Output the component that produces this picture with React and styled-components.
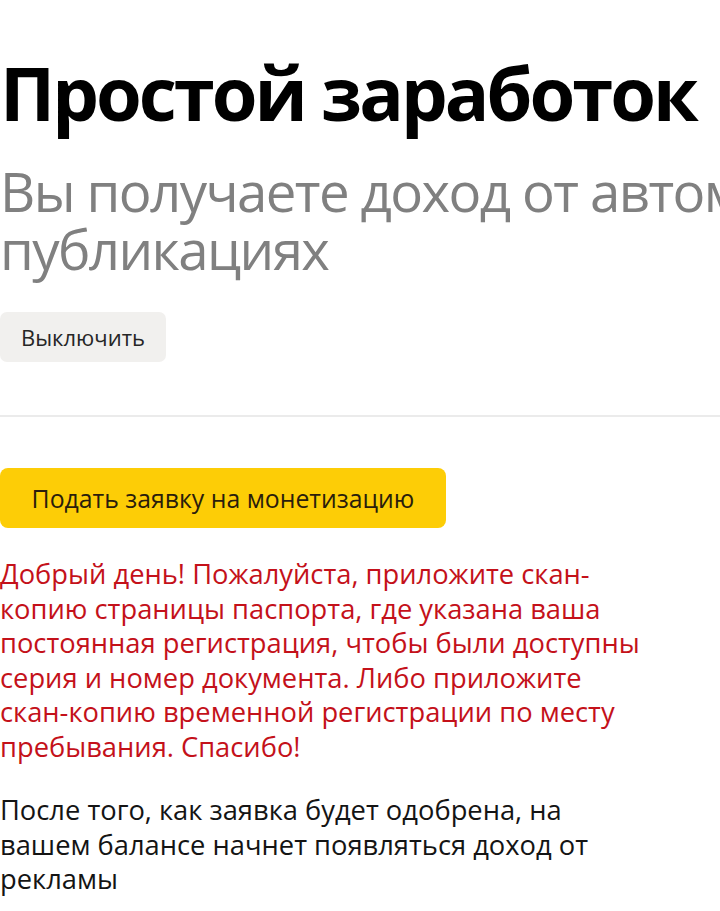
import React from "react";
import styled, { createGlobalStyle } from "styled-components";

const Global = createGlobalStyle`
  html, body { margin: 0; padding: 0; background: #fff; }
  body { font-family: "Open Sans", "Noto Sans", sans-serif; overflow: hidden; }
`;

const Page = styled.main`
  width: 720px;
  height: 911px;
  overflow: hidden;
  display: flex;
  flex-direction: column;
`;

const Hero = styled.section`
  display: flex;
  flex-direction: column;
  padding-top: 48px;
`;

const Title = styled.h1`
  margin: 0;
  font-family: "Open Sans", sans-serif;
  font-weight: 700;
  font-size: 74px;
  line-height: 90px;
  color: #000;
  white-space: nowrap;
  letter-spacing: -3px;
`;

const Subtitle = styled.p`
  margin: 24px 0 0;
  font-family: "Open Sans", sans-serif;
  font-weight: 400;
  font-size: 54.6px;
  line-height: 58px;
  color: #808080;
  white-space: nowrap;
  letter-spacing: -1.6px;
`;

const GreyButton = styled.button`
  align-self: flex-start;
  margin-top: 34px;
  height: 50px;
  width: 166px;
  border: none;
  border-radius: 7px;
  background: #f1f0ee;
  font-family: "Open Sans", sans-serif;
  font-size: 22px;
  color: #262626;
  padding: 0;
`;

const Divider = styled.hr`
  margin: 53px 0 0;
  border: none;
  height: 2px;
  background: #ebebeb;
`;

const Section = styled.section`
  display: flex;
  flex-direction: column;
  padding-top: 51px;
`;

const YellowButton = styled.button`
  align-self: flex-start;
  width: 446px;
  height: 60px;
  border: none;
  border-radius: 8px;
  background: #fdcd06;
  font-family: "Open Sans", sans-serif;
  font-size: 24.8px;
  color: #2a1d0c;
  padding: 0;
`;

const Message = styled.p`
  margin: ${(p) => p.$top}px 0 0;
  width: 648px;
  font-family: "Open Sans", sans-serif;
  font-size: 27.3px;
  line-height: 34.5px;
  color: ${(p) => p.$color};
`;

export default function App() {
  return (
    <>
      <Global />
      <Page>
        <Hero>
          <Title>Простой заработок</Title>
          <Subtitle>
            Вы получаете доход от автоматически размещённой рекламы в ваших
            <br />
            публикациях
          </Subtitle>
          <GreyButton>Выключить</GreyButton>
        </Hero>
        <Divider />
        <Section>
          <YellowButton>Подать заявку на монетизацию</YellowButton>
          <Message $top={29} $color="#c4111a">
            Добрый день! Пожалуйста, приложите скан-копию страницы паспорта, где указана ваша постоянная регистрация, чтобы были доступны серия и номер документа. Либо приложите скан-копию временной регистрации по месту пребывания. Спасибо!
          </Message>
          <Message $top={29} $color="#141414">
            После того, как заявка будет одобрена, на вашем балансе начнет появляться доход от рекламы
          </Message>
        </Section>
      </Page>
    </>
  );
}
